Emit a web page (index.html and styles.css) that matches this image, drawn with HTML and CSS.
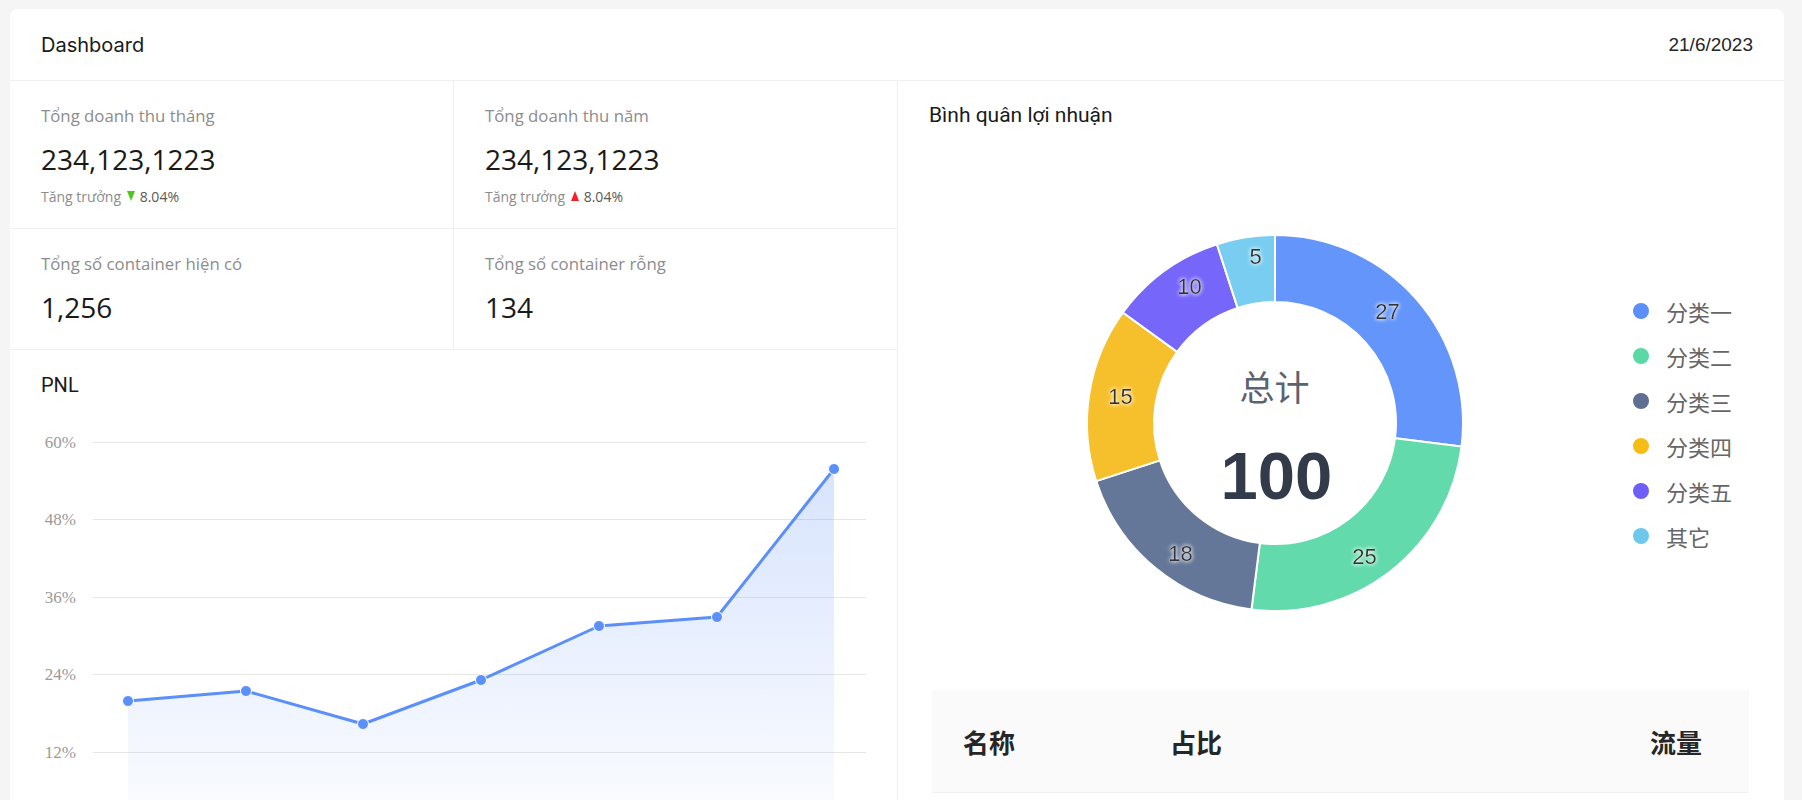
FILE: index.html
```html
<!DOCTYPE html>
<html lang="vi">
<head>
<meta charset="utf-8">
<title>Dashboard</title>
<link rel="stylesheet" href="styles.css">
</head>
<body>
<div class="card">
  <div class="card-header">
    <span class="card-title">Dashboard</span>
    <span class="card-date">21/6/2023</span>
  </div>
  <div class="card-body">
    <div class="left">
      <div class="stats">
        <div class="stat">
          <div class="stat-label">Tổng doanh thu tháng</div>
          <div class="stat-value">234,123,1223</div>
          <div class="stat-growth">Tăng trưởng <span class="tri tri-down"></span><span class="pct">8.04%</span></div>
        </div>
        <div class="stat">
          <div class="stat-label">Tổng doanh thu năm</div>
          <div class="stat-value">234,123,1223</div>
          <div class="stat-growth">Tăng trưởng <span class="tri tri-up"></span><span class="pct">8.04%</span></div>
        </div>
        <div class="stat">
          <div class="stat-label">Tổng số container hiện có</div>
          <div class="stat-value">1,256</div>
        </div>
        <div class="stat">
          <div class="stat-label">Tổng số container rỗng</div>
          <div class="stat-value">134</div>
        </div>
      </div>
      <div class="pnl">
        <div class="section-title">PNL</div>
        <svg class="line-chart" width="887" height="403" viewBox="0 0 887 403">
          <defs>
            <linearGradient id="area" x1="0" y1="72" x2="0" y2="432" gradientUnits="userSpaceOnUse">
              <stop offset="0" stop-color="#5B8FF9" stop-opacity="0.24"/>
              <stop offset="1" stop-color="#5B8FF9" stop-opacity="0.02"/>
            </linearGradient>
          </defs>
          <g class="grid">
            <line x1="83" y1="45.5" x2="856" y2="45.5"/>
            <line x1="83" y1="122.5" x2="856" y2="122.5"/>
            <line x1="83" y1="200.5" x2="856" y2="200.5"/>
            <line x1="83" y1="277.5" x2="856" y2="277.5"/>
            <line x1="83" y1="355.5" x2="856" y2="355.5"/>
          </g>
          <g class="axis-label">
            <text x="66" y="51">60%</text>
            <text x="66" y="128">48%</text>
            <text x="66" y="206">36%</text>
            <text x="66" y="283">24%</text>
            <text x="66" y="361">12%</text>
          </g>
          <path class="area" d="M118,304 L236,294 L353,327 L471,283 L589,229 L707,220 L824,72 L824,432 L118,432 Z"/>
          <polyline class="line" points="118,304 236,294 353,327 471,283 589,229 707,220 824,72"/>
          <g class="dots">
            <circle cx="118" cy="304" r="5.5"/>
            <circle cx="236" cy="294" r="5.5"/>
            <circle cx="353" cy="327" r="5.5"/>
            <circle cx="471" cy="283" r="5.5"/>
            <circle cx="589" cy="229" r="5.5"/>
            <circle cx="707" cy="220" r="5.5"/>
            <circle cx="824" cy="72" r="5.5"/>
          </g>
        </svg>
      </div>
    </div>
    <div class="right">
      <div class="section-title">Bình quân lợi nhuận</div>
      <div class="pie-area">
        <div class="donut">
          <svg width="376" height="376" viewBox="0 0 376 376" class="donut-svg">
            <defs>
              <filter id="halo" x="-50%" y="-50%" width="200%" height="200%">
                <feGaussianBlur in="SourceAlpha" stdDeviation="2" result="b"/>
                <feFlood flood-color="#ffffff" flood-opacity="0.85"/>
                <feComposite in2="b" operator="in" result="g"/>
                <feMerge><feMergeNode in="g"/><feMergeNode in="g"/><feMergeNode in="SourceGraphic"/></feMerge>
              </filter>
            </defs>
            <g class="segs">
              <path fill="#6395FA" d="M188,0 A188,188 0 0 1 374.52,211.56 L308.05,203.17 A121,121 0 0 0 188,67 Z"/>
              <path fill="#62DAAB" d="M374.52,211.56 A188,188 0 0 1 164.44,374.52 L172.83,308.05 A121,121 0 0 0 308.05,203.17 Z"/>
              <path fill="#657798" d="M164.44,374.52 A188,188 0 0 1 9.20,246.10 L72.92,225.39 A121,121 0 0 0 172.83,308.05 Z"/>
              <path fill="#F6C02D" d="M9.20,246.10 A188,188 0 0 1 35.90,77.50 L90.11,116.88 A121,121 0 0 0 72.92,225.39 Z"/>
              <path fill="#7666F9" d="M35.90,77.50 A188,188 0 0 1 129.90,9.20 L150.61,72.92 A121,121 0 0 0 90.11,116.88 Z"/>
              <path fill="#78CDF0" d="M129.90,9.20 A188,188 0 0 1 188,0 L188,67 A121,121 0 0 0 150.61,72.92 Z"/>
            </g>
            <g class="seg-label" filter="url(#halo)">
              <text x="300.5" y="76">27</text>
              <text x="277.5" y="321">25</text>
              <text x="93.5" y="318">18</text>
              <text x="33.5" y="161">15</text>
              <text x="102.5" y="51">10</text>
              <text x="168.5" y="21">5</text>
            </g>
            <text class="total-label" x="187.5" y="150">总计</text>
            <text class="total-value" x="189.5" y="240">100</text>
          </svg>
        </div>
        <ul class="legend">
          <li><span class="dot c1"></span>分类一</li>
          <li><span class="dot c2"></span>分类二</li>
          <li><span class="dot c3"></span>分类三</li>
          <li><span class="dot c4"></span>分类四</li>
          <li><span class="dot c5"></span>分类五</li>
          <li><span class="dot c6"></span>其它</li>
        </ul>
      </div>
      <div class="table-head">
        <span>名称</span>
        <span>占比</span>
        <span>流量</span>
      </div>
    </div>
  </div>
</div>
</body>
</html>
```

FILE: styles.css
```css
html, body {
  margin: 0;
  height: 800px;
  overflow: hidden;
}
body {
  box-sizing: border-box;
  padding: 9px 18px 0 10px;
  background: #f5f5f5;
  font-family: "Open Sans", "Noto Sans", sans-serif;
  color: #1f1f1f;
}
.card {
  background: #fff;
  border-radius: 8px 8px 0 0;
  height: 791px;
  overflow: hidden;
}
.card-header {
  box-sizing: border-box;
  height: 72px;
  border-bottom: 1px solid #f0f0f0;
  display: flex;
  justify-content: space-between;
  align-items: center;
  padding: 0 31px 0 31px;
}
.card-title {
  font-family: Inter, sans-serif;
  font-size: 20px;
  color: #1a1a1a;
}
.card-date {
  font-family: "Liberation Sans", Arial, sans-serif;
  font-size: 19px;
  color: #262626;
}
.card-body {
  display: grid;
  grid-template-columns: 888px 1fr;
}
.left {
  border-right: 1px solid #f0f0f0;
}
.stats {
  display: grid;
  grid-template-columns: 444px 1fr;
}
.stat {
  padding: 23px 31px 22px;
  border-bottom: 1px solid #f0f0f0;
}
.stat:nth-child(odd) {
  border-right: 1px solid #f0f0f0;
}
.stat-label {
  font-size: 16.8px;
  line-height: 24px;
  color: #8c8c8c;
}
.stat-value {
  margin-top: 11px;
  font-size: 28px;
  line-height: 40px;
  color: #1a1a1a;
}
.stat-growth {
  margin-top: 7px;
  height: 20px;
  display: flex;
  align-items: center;
  font-size: 14px;
  color: #8c8c8c;
  white-space: pre;
}
.tri {
  width: 0;
  height: 0;
  border-left: 4px solid transparent;
  border-right: 4px solid transparent;
  margin: 0 5px 0 2px;
}
.tri-down {
  border-top: 10px solid #52c41a;
}
.tri-up {
  border-bottom: 10px solid #f5222d;
}
.pct {
  color: #595959;
}
.section-title {
  font-family: Roboto, sans-serif;
  font-size: 20px;
  line-height: 24px;
  color: #1a1a1a;
}
.right .section-title {
  font-size: 21px;
}
.pnl {
  padding-top: 23px;
}
.pnl .section-title {
  padding-left: 31px;
}
.line-chart {
  display: block;
}
.grid line {
  stroke: #e6e6e6;
  stroke-width: 1;
}
.axis-label text {
  font-family: "Liberation Serif", serif;
  font-size: 17px;
  fill: #9a9a9a;
  text-anchor: end;
}
.area {
  fill: url(#area);
}
.line {
  fill: none;
  stroke: #5B8FF9;
  stroke-width: 3;
  stroke-linejoin: round;
}
.dots circle {
  fill: #5B8FF9;
  stroke: #fff;
  stroke-width: 1;
}
.right {
  padding: 22px 31px 0;
}
.pie-area {
  display: flex;
  align-items: center;
  height: 376px;
  margin-top: 108px;
}
.donut {
  width: 376px;
  height: 376px;
  margin-left: 157.5px;
}
.donut-svg {
  display: block;
  overflow: visible;
}
.segs path {
  stroke: #fff;
  stroke-width: 2;
}
.seg-label text {
  font-family: "Liberation Sans", Arial, sans-serif;
  font-size: 22px;
  fill: #333;
  text-anchor: middle;
  dominant-baseline: central;
}
.total-label {
  font-family: "Noto Sans CJK SC", sans-serif;
  font-size: 35px;
  fill: #5c6370;
  text-anchor: middle;
  dominant-baseline: central;
}
.total-value {
  font-family: "Liberation Sans", Arial, sans-serif;
  font-weight: 700;
  font-size: 67px;
  fill: #333b4a;
  text-anchor: middle;
  dominant-baseline: central;
}
.legend {
  list-style: none;
  margin: 0 0 0 170.5px;
  padding: 0;
}
.legend li {
  display: flex;
  align-items: center;
  height: 45px;
  font-family: "Noto Sans CJK SC", sans-serif;
  font-size: 22px;
  color: #666;
}
.dot {
  width: 16px;
  height: 16px;
  border-radius: 50%;
  margin-right: 17px;
}
.c1 { background: #5B8FF9; }
.c2 { background: #5AD8A6; }
.c3 { background: #5D7092; }
.c4 { background: #F6BD16; }
.c5 { background: #6F5EF9; }
.c6 { background: #6DC8EC; }
.table-head {
  box-sizing: border-box;
  margin: 79px 4px 0 3px;
  height: 103px;
  background: #fafafa;
  border-bottom: 1px solid #f0f0f0;
  display: grid;
  grid-template-columns: 207px 1fr auto;
  align-items: center;
  padding: 0 47px 0 31px;
  font-family: "Noto Sans CJK SC", sans-serif;
  font-weight: 700;
  font-size: 26px;
  color: #262626;
}
```
